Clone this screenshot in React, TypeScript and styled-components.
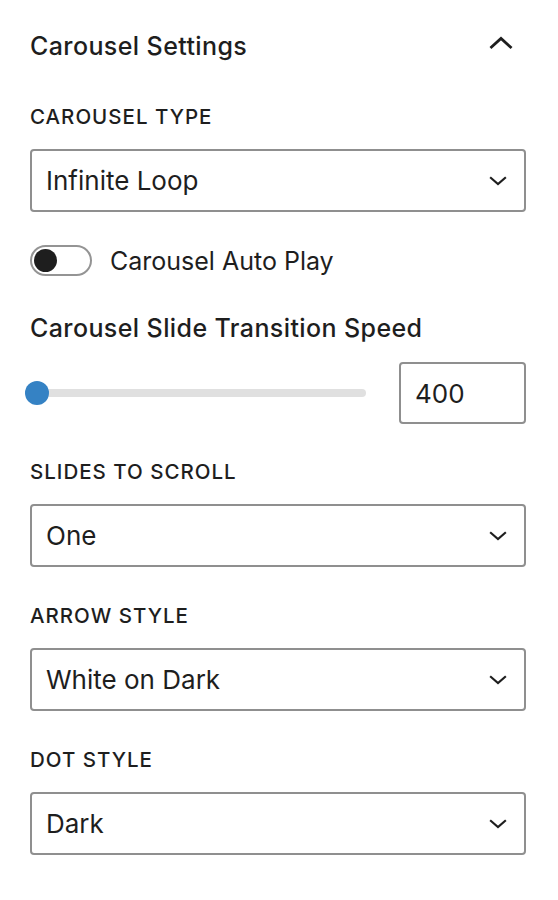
import React, { useState } from "react";
import styled, { createGlobalStyle } from "styled-components";

const GlobalStyle = createGlobalStyle`
  html, body {
    margin: 0;
    padding: 0;
    background: #fff;
  }
  body {
    font-family: Inter, "Noto Sans", "Liberation Sans", sans-serif;
    color: #1e1e1e;
    -webkit-font-smoothing: antialiased;
  }
`;

const Panel = styled.div`
  width: 496px;
  padding: 18px 32px 40px 30px;
  display: flex;
  flex-direction: column;
`;

const Header = styled.div`
  height: 56px;
  display: flex;
  align-items: center;
  justify-content: space-between;
  margin-bottom: 31px;
`;

const Title = styled.h2`
  margin: 0;
  font-size: 25px;
  font-weight: 500;
  line-height: 30px;
  letter-spacing: 0.4px;
`;

const Chevron = styled.svg`
  flex: none;
  display: block;
  fill: none;
  stroke: #1e1e1e;
  stroke-linecap: square;
`;

const HeaderToggle = styled.button`
  border: 0;
  background: none;
  padding: 0;
  margin: 0 13px 8px 0;
  cursor: pointer;
`;

const Group = styled.div<{ $gap?: number }>`
  display: flex;
  flex-direction: column;
  margin-bottom: ${({ $gap }) => ($gap ?? 37)}px;
`;

const Label = styled.label`
  font-size: 20.5px;
  font-weight: 500;
  line-height: 24px;
  letter-spacing: 1px;
  text-transform: uppercase;
  margin-bottom: 20px;
`;

const SelectBox = styled.div`
  height: 63px;
  box-sizing: border-box;
  border: 2px solid #8f8f8f;
  border-radius: 4px;
  display: flex;
  align-items: center;
  justify-content: space-between;
  padding: 0 17px 0 14px;
  font-size: 26px;
  cursor: pointer;
`;

const ToggleRow = styled.div`
  display: flex;
  align-items: center;
  gap: 18px;
  margin-bottom: 37px;
  font-size: 25px;
`;

const Track = styled.span<{ $on: boolean }>`
  width: 62px;
  height: 31px;
  box-sizing: border-box;
  border: 2px solid ${({ $on }) => ($on ? "#3582c4" : "#949494")};
  background: ${({ $on }) => ($on ? "#3582c4" : "#fff")};
  border-radius: 16px;
  display: flex;
  align-items: center;
  padding: 0 2px;
  justify-content: ${({ $on }) => ($on ? "flex-end" : "flex-start")};
  cursor: pointer;
`;

const Knob = styled.span<{ $on: boolean }>`
  width: 23px;
  height: 23px;
  border-radius: 50%;
  background: ${({ $on }) => ($on ? "#fff" : "#1e1e1e")};
`;

const FieldTitle = styled.div`
  font-size: 25px;
  font-weight: 500;
  line-height: 30px;
  letter-spacing: 0.4px;
  margin-bottom: 19px;
`;

const RangeRow = styled.div`
  display: flex;
  align-items: center;
  gap: 33px;
  margin-bottom: 36px;
`;

const RangeWrap = styled.div`
  position: relative;
  flex: 1;
  height: 62px;
  display: flex;
  align-items: center;
`;

const RangeRail = styled.div`
  width: 100%;
  height: 8px;
  border-radius: 4px;
  background: #e0e0e0;
`;

const RangeThumb = styled.span`
  position: absolute;
  left: -5px;
  top: 19px;
  width: 24px;
  height: 24px;
  border-radius: 50%;
  background: #3582c4;
`;

const NumberInput = styled.div`
  width: 127px;
  height: 62px;
  box-sizing: border-box;
  border: 2px solid #8f8f8f;
  border-radius: 4px;
  display: flex;
  align-items: center;
  padding-left: 14px;
  font-size: 26px;
`;

const DownIcon = () => (
  <Chevron width="18" height="10" viewBox="0 0 18 10" strokeWidth="2.2">
    <polyline points="2,2 9,8 16,2" />
  </Chevron>
);

const Select = ({ label, value, gap }: { label: string; value: string; gap?: number }) => (
  <Group $gap={gap}>
    <Label>{label}</Label>
    <SelectBox>
      <span>{value}</span>
      <DownIcon />
    </SelectBox>
  </Group>
);

export default function App() {
  const [autoPlay, setAutoPlay] = useState(false);

  return (
    <>
      <GlobalStyle />
      <Panel>
        <Header>
          <Title>Carousel Settings</Title>
          <HeaderToggle aria-label="Collapse">
            <Chevron width="24" height="13" viewBox="0 0 24 13" strokeWidth="2.8">
              <polyline points="2.5,11 12,2.5 21.5,11" />
            </Chevron>
          </HeaderToggle>
        </Header>

        <Select label="Carousel Type" value="Infinite Loop" gap={33} />

        <ToggleRow>
          <Track $on={autoPlay} onClick={() => setAutoPlay(!autoPlay)}>
            <Knob $on={autoPlay} />
          </Track>
          <span>Carousel Auto Play</span>
        </ToggleRow>

        <FieldTitle>Carousel Slide Transition Speed</FieldTitle>
        <RangeRow>
          <RangeWrap>
            <RangeRail />
            <RangeThumb />
          </RangeWrap>
          <NumberInput>400</NumberInput>
        </RangeRow>

        <Select label="Slides to Scroll" value="One" />
        <Select label="Arrow Style" value="White on Dark" />
        <Select label="Dot Style" value="Dark" gap={0} />
      </Panel>
    </>
  );
}
